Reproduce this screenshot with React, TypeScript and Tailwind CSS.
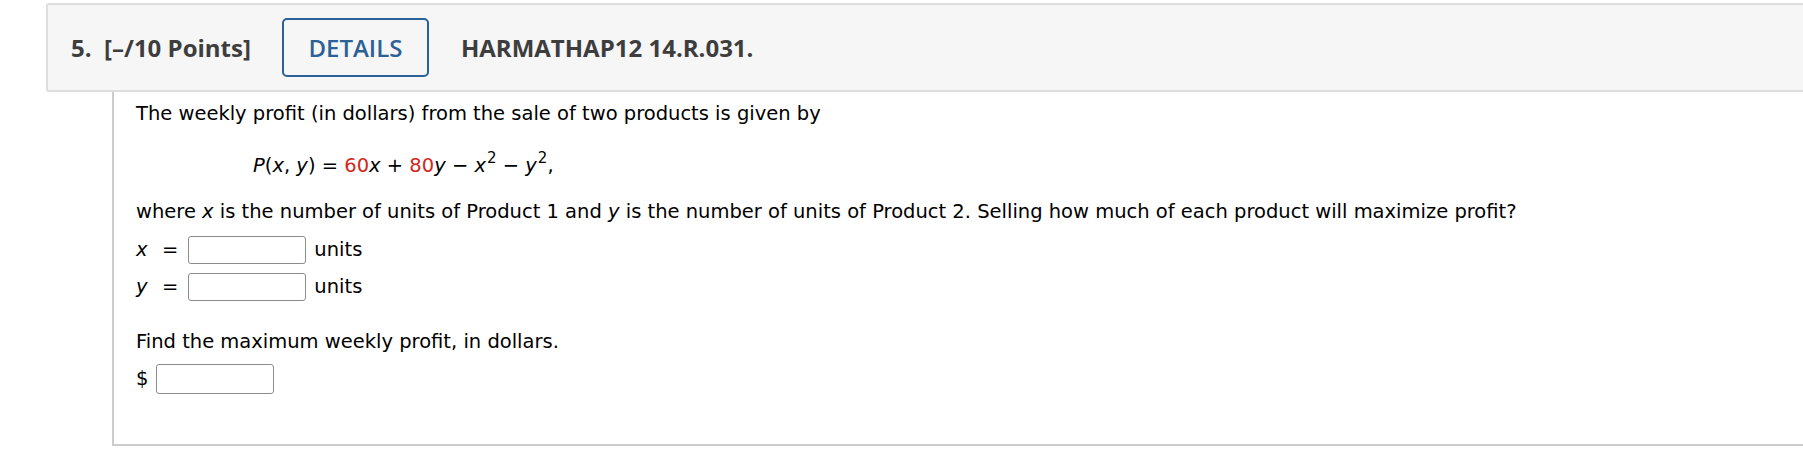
const body = "font-['DejaVu_Sans',Verdana,sans-serif] text-[19.5px] leading-6 text-black";

const Blank = ({ className }: { className?: string }) => (
  <span className={`inline-block h-[28px] w-[118px] rounded-[3px] border border-[#8c8c8c] bg-white ${className ?? ""}`} />
);

const Red = ({ children }: { children: React.ReactNode }) => <span className="text-[#d3271d]">{children}</span>;

const AnswerRow = ({ v }: { v: string }) => (
  <div className="flex h-[32px] items-center">
    <span className="w-[26px] italic">{v}</span>
    <span>=</span>
    <Blank className="ml-[10px]" />
    <span className="ml-[8px]">units</span>
  </div>
);

export default function App() {
  return (
    <div className="h-[467px] w-[1803px] overflow-hidden bg-white pt-[3px]">
      {/* header */}
      <div className="ml-[46px] flex h-[89px] w-[1800px] items-center rounded-[3px] border-2 border-[#dddddd] bg-[#f6f6f6] pl-[23px] font-['Open_Sans',sans-serif] text-[24px] font-bold text-[#3d3d3d]">
        <span className="whitespace-pre">5.  [–/10 Points]</span>
        <div className="ml-[31px] flex h-[59px] w-[147px] items-center justify-center rounded-[5px] border-2 border-[#2b6197] font-semibold text-[#2b6197]">
          DETAILS
        </div>
        <span className="ml-[32px]">HARMATHAP12 14.R.031.</span>
      </div>

      {/* question body */}
      <div className={`ml-[112px] w-[1720px] border-b-2 border-l-2 border-[#cccccc] pt-[10px] pb-[49px] pl-[22px] ${body}`}>
        <p>The weekly profit (in dollars) from the sale of two products is given by</p>
        <p className="mt-[28px] ml-[117px] whitespace-pre">
          <i>P</i>(<i>x</i>, <i>y</i>) = <Red>60</Red>
          <i>x</i> + <Red>80</Red>
          <i>y</i> − <i>x</i>
          <sup className="-top-[9px] ml-[1px] text-[15px]">2</sup> − <i>y</i>
          <sup className="-top-[9px] ml-[1px] text-[15px]">2</sup>,
        </p>
        <p className="mt-[22px]">
          where <i>x</i> is the number of units of Product 1 and <i>y</i> is the number of units of Product 2. Selling
          how much of each product will maximize profit?
        </p>
        <div className="mt-[10px] flex flex-col gap-[5px]">
          <AnswerRow v="x" />
          <AnswerRow v="y" />
        </div>
        <p className="mt-[27px]">Find the maximum weekly profit, in dollars.</p>
        <div className="mt-[9px] flex h-[32px] items-center">
          <span>$</span>
          <Blank className="ml-[8px] h-[30px]" />
        </div>
      </div>
    </div>
  );
}
